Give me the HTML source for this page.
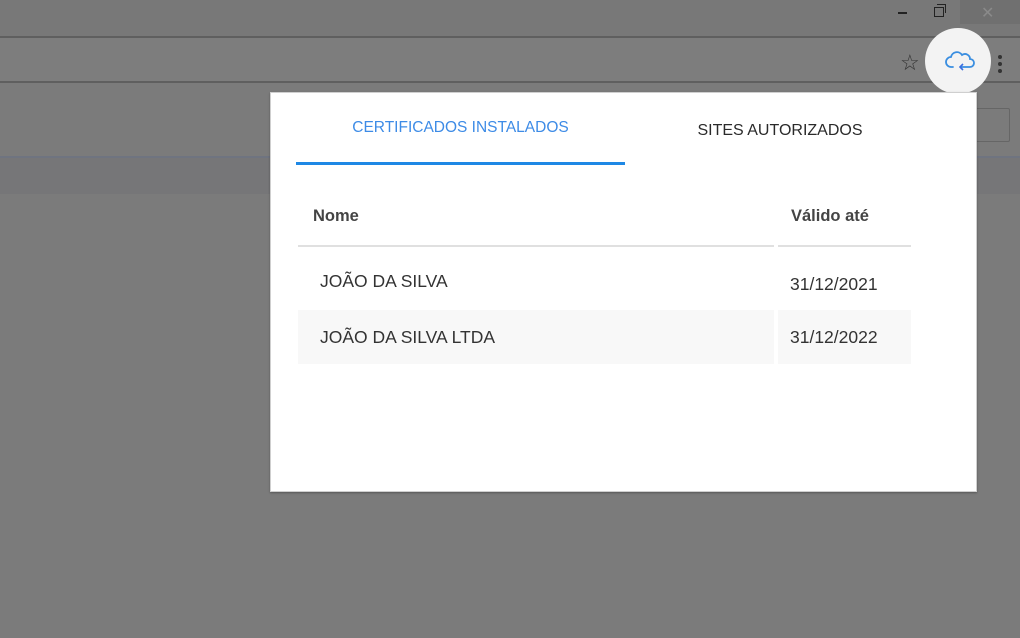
<!DOCTYPE html>
<html><head><style>
body{margin:0;width:1020px;height:638px;background:#7b7b7b;position:relative;overflow:hidden;font-family:"Liberation Sans",sans-serif}
.a{position:absolute}
</style></head><body>
<div class="a" style="left:0;top:0;width:1020px;height:36px;background:#787878"></div>
<div class="a" style="left:960px;top:0;width:60px;height:24px;background:#707070"></div>
<div class="a" style="left:981px;top:3px;color:#8a8a8a;font-size:16px">✕</div>
<div class="a" style="left:898px;top:12px;width:9px;height:2px;background:#222"></div>
<div class="a" style="left:934px;top:7px;width:8px;height:8px;border:1.5px solid #222"></div>
<div class="a" style="left:937px;top:4px;width:8px;height:8px;border-top:1.5px solid #222;border-right:1.5px solid #222"></div>
<div class="a" style="left:0;top:36px;width:1020px;height:2px;background:#5f5f5f"></div>
<div class="a" style="left:0;top:38px;width:1020px;height:43px;background:#7d7d7d"></div>
<div class="a" style="left:0;top:81px;width:1020px;height:2px;background:#5f5f5f"></div>
<div class="a" style="left:0;top:156px;width:1020px;height:2px;background:#6f7480"></div>
<div class="a" style="left:0;top:158px;width:1020px;height:36px;background:#767678"></div>
<div class="a" style="left:900px;top:50px;color:#333;font-size:22px">☆</div>
<div class="a" style="left:998px;top:55px;width:4px;height:4px;border-radius:2px;background:#333;box-shadow:0 7px 0 #333,0 14px 0 #333"></div>
<div class="a" style="left:960px;top:108px;width:48px;height:32px;border:1px solid #666;border-radius:2px"></div>
<div class="a" style="left:925px;top:28px;width:66px;height:66px;border-radius:50%;background:#f3f3f3"></div>
<svg class="a" style="left:944px;top:50px" width="32" height="24" viewBox="0 0 32 24"><path d="M9 17H7a5 5 0 0 1 0-10 6 6 0 0 1 11-2 5 5 0 0 1 8 4 4 4 0 0 1 0 8h-9" fill="none" stroke="#3a8ee0" stroke-width="1.8" stroke-linecap="round"/><path d="M19 14l-3 3 3 3" fill="none" stroke="#3a6ee0" stroke-width="1.6"/></svg>
<div class="a" style="left:270px;top:92px;width:705px;height:398px;background:#fff;border:1px solid #cfcfcf;box-shadow:0 1px 2px rgba(0,0,0,.3)"></div>
<div class="a" style="left:296px;top:119px;width:329px;text-align:center;font-size:15.5px;color:#3d8be6">CERTIFICADOS INSTALADOS</div>
<div class="a" style="left:620px;top:122px;width:320px;text-align:center;font-size:16px;color:#2a2a2a">SITES AUTORIZADOS</div>
<div class="a" style="left:296px;top:162px;width:329px;height:3px;background:#1e88e5"></div>
<div class="a" style="left:313px;top:207px;font-size:16.5px;font-weight:bold;color:#444">Nome</div>
<div class="a" style="left:791px;top:207px;font-size:16.5px;font-weight:bold;color:#444">Válido até</div>
<div class="a" style="left:298px;top:245px;width:476px;height:2px;background:#e0e0e0"></div>
<div class="a" style="left:778px;top:245px;width:133px;height:2px;background:#e0e0e0"></div>
<div class="a" style="left:298px;top:310px;width:476px;height:54px;background:#f8f8f8"></div>
<div class="a" style="left:778px;top:310px;width:133px;height:54px;background:#f8f8f8"></div>
<div class="a" style="left:320px;top:271px;font-size:17.5px;color:#333">JOÃO DA SILVA</div>
<div class="a" style="left:790px;top:274px;font-size:17.5px;color:#333">31/12/2021</div>
<div class="a" style="left:320px;top:327px;font-size:17.5px;color:#333">JOÃO DA SILVA LTDA</div>
<div class="a" style="left:790px;top:327px;font-size:17.5px;color:#333">31/12/2022</div>
</body></html>
